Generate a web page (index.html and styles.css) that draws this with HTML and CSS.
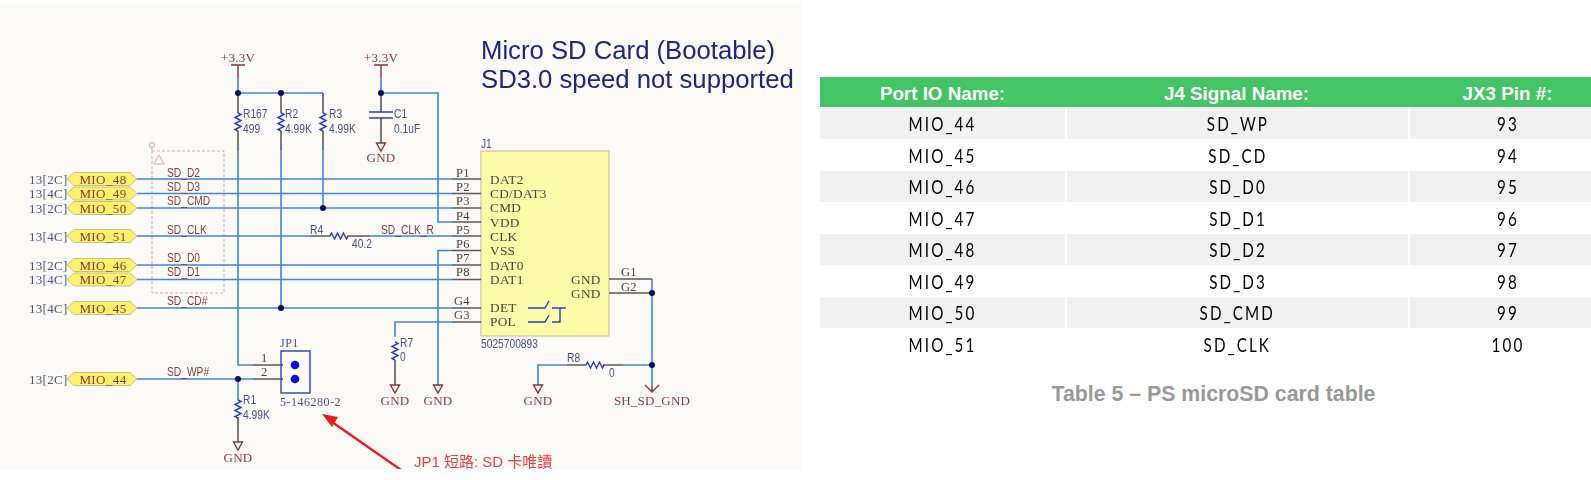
FILE: index.html
```html
<!DOCTYPE html>
<html lang="en">
<head>
  <meta charset="UTF-8">
  <meta name="viewport" content="width=device-width, initial-scale=1.0">
  <title>PS microSD card</title>
  <link rel="stylesheet" href="styles.css">
</head>
<body>
  <div class="page">
    <svg class="schematic" width="802" height="465" viewBox="0 4 802 465" xmlns="http://www.w3.org/2000/svg">
      <defs>
        <path id="gnd" class="pwr" d="M-4.5 0h9L0 8z"/>
        <path id="res" class="zig" d="M0 0l3 1.5-6 3 6 3-6 3 6 3-6 3 3 1.5"/>
        <path id="tag" class="tag" d="M67 0l7-6.5h56l7 6.5-7 6.5H74z"/>
        <circle id="dot" r="3" class="dot"/>
      </defs>

      <!-- title -->
      <text class="title" x="481" y="59">Micro SD Card (Bootable)</text>
      <text class="title" x="481" y="88">SD3.0 speed not supported</text>

      <!-- connector -->
      <rect class="chip" x="481" y="151" width="128" height="185"/>
      <text class="ref" x="481" y="148">J1</text>
      <text class="ref" x="481" y="348">5025700893</text>

      <!-- test point box -->
      <path class="dash" d="M152 151h72v142h-72zM152 151v-4"/>
      <circle class="pink" cx="152" cy="145" r="2.6"/>
      <path class="pink" d="M154 164l5-9 5 9z"/>

      <!-- nets -->
      <path class="wire" d="M137 179H452M137 193.500H452M137 208H452M137 236H310M370 236H452M137 265H452M137 279.500H452M137 308H452M137 379H253"/>
      <path class="wire" d="M238 78V93M238 151V365H253M281 93H323M238 93H281M281 150V308M323 150V208"/>
      <path class="wire" d="M381 78V93M381 93H438V222H452M452 250.500H438V385M395 337V322H452M652 279V385M538 385V365H567M623 365H652M238 379V400"/>
      <path class="stub" d="M238 93V113M238 131V151M281 93V113M281 131V150M323 93V113M323 131V150M381 93V112M381 118V143"/>
      <path class="stub" d="M452 179H481M452 193.500H481M452 208H481M452 222H481M452 236H481M452 250.500H481M452 265H481M452 279.500H481M452 308H481M452 322H481M609 279H652M609 293H652"/>
      <path class="stub" d="M310 236H330M347 236H370M567 365H586M603 365H623M253 365H283M253 379H283M238 417V442M395 360V385"/>
      <path class="pwr" d="M231 65h14M238 65V78M374 65h14M381 65V78M645 385l7 7 7-7M652 385V392"/>
      <path class="plate" d="M369 112h24M369 118h24"/>

      <use href="#res" x="238" y="113"/>
      <use href="#res" x="281" y="113"/>
      <use href="#res" x="323" y="113"/>
      <use href="#res" x="238" y="400"/>
      <use href="#res" x="395" y="342"/>
      <use href="#res" transform="translate(330 236) rotate(-90)"/>
      <use href="#res" transform="translate(586 365) rotate(-90)"/>

      <use href="#gnd" x="381" y="143"/>
      <use href="#gnd" x="238" y="442"/>
      <use href="#gnd" x="395" y="385"/>
      <use href="#gnd" x="438" y="385"/>
      <use href="#gnd" x="538" y="385"/>

      <use href="#dot" x="238" y="93"/>
      <use href="#dot" x="281" y="93"/>
      <use href="#dot" x="381" y="93"/>
      <use href="#dot" x="323" y="208"/>
      <use href="#dot" x="281" y="308"/>
      <use href="#dot" x="238" y="379"/>
      <use href="#dot" x="652" y="293"/>
      <use href="#dot" x="652" y="365"/>

      <!-- switch in connector -->
      <path class="zigw" d="M528 308h17l4-7M528 322h17l4-7M552 308h14M560 308v14h-8"/>

      <!-- jumper -->
      <rect class="jp" x="281" y="351" width="29" height="42"/>
      <circle class="pin" cx="295" cy="365" r="4.300"/>
      <circle class="pin" cx="295" cy="379" r="4.300"/>

      <!-- port tags -->
      <use href="#tag" y="179"/>
      <use href="#tag" y="193.500"/>
      <use href="#tag" y="208"/>
      <use href="#tag" y="236"/>
      <use href="#tag" y="265"/>
      <use href="#tag" y="279.500"/>
      <use href="#tag" y="308"/>
      <use href="#tag" y="379"/>
      <g class="tagtxt">
        <text x="103" y="184">MIO_48</text>
        <text x="103" y="198">MIO_49</text>
        <text x="103" y="213">MIO_50</text>
        <text x="103" y="241">MIO_51</text>
        <text x="103" y="270">MIO_46</text>
        <text x="103" y="284">MIO_47</text>
        <text x="103" y="313">MIO_45</text>
        <text x="103" y="384">MIO_44</text>
      </g>
      <g class="sheet">
        <text x="29" y="184">13[2C]</text>
        <text x="29" y="198">13[4C]</text>
        <text x="29" y="213">13[2C]</text>
        <text x="29" y="241">13[4C]</text>
        <text x="29" y="270">13[2C]</text>
        <text x="29" y="284">13[4C]</text>
        <text x="29" y="313">13[4C]</text>
        <text x="29" y="384">13[2C]</text>
      </g>

      <!-- net names -->
      <g class="net">
        <text x="167" y="177">SD_D2</text>
        <text x="167" y="191">SD_D3</text>
        <text x="167" y="205">SD_CMD</text>
        <text x="167" y="234">SD_CLK</text>
        <text x="167" y="262">SD_D0</text>
        <text x="167" y="276">SD_D1</text>
        <text x="167" y="305">SD_CD#</text>
        <text x="167" y="376">SD_WP#</text>
        <text x="381" y="234">SD_CLK_R</text>
      </g>

      <!-- part values -->
      <g class="ref">
        <text x="243" y="118">R167</text>
        <text x="243" y="133">499</text>
        <text x="285" y="118">R2</text>
        <text x="285" y="133">4.99K</text>
        <text x="329" y="118">R3</text>
        <text x="329" y="133">4.99K</text>
        <text x="394" y="118">C1</text>
        <text x="394" y="133">0.1uF</text>
        <text x="310" y="234">R4</text>
        <text x="352" y="248">40.2</text>
        <text x="243" y="404">R1</text>
        <text x="243" y="419">4.99K</text>
        <text x="400" y="347">R7</text>
        <text x="400" y="361">0</text>
        <text x="567" y="362">R8</text>
        <text x="609" y="377">0</text>
      </g>
      <text class="part" x="280" y="347">JP1</text>
      <text class="part" x="280" y="406">5-146280-2</text>

      <!-- pin numbers and names -->
      <g class="pinno">
        <text x="456" y="177">P1</text>
        <text x="456" y="191">P2</text>
        <text x="456" y="205">P3</text>
        <text x="456" y="220">P4</text>
        <text x="456" y="234">P5</text>
        <text x="456" y="248">P6</text>
        <text x="456" y="262">P7</text>
        <text x="456" y="276">P8</text>
        <text x="454" y="305">G4</text>
        <text x="454" y="319">G3</text>
        <text x="621" y="276">G1</text>
        <text x="621" y="291">G2</text>
        <text x="261" y="362">1</text>
        <text x="261" y="376">2</text>
      </g>
      <g class="pinname">
        <text x="490" y="184">DAT2</text>
        <text x="490" y="198">CD/DAT3</text>
        <text x="490" y="212">CMD</text>
        <text x="490" y="227">VDD</text>
        <text x="490" y="241">CLK</text>
        <text x="490" y="255">VSS</text>
        <text x="490" y="270">DAT0</text>
        <text x="490" y="284">DAT1</text>
        <text x="490" y="312">DET</text>
        <text x="490" y="326">POL</text>
        <text x="571" y="284">GND</text>
        <text x="571" y="298">GND</text>
      </g>

      <!-- power names -->
      <g class="power">
        <text x="238" y="62">+3.3V</text>
        <text x="381" y="62">+3.3V</text>
        <text x="381" y="162">GND</text>
        <text x="238" y="462">GND</text>
        <text x="395" y="405">GND</text>
        <text x="438" y="405">GND</text>
        <text x="538" y="405">GND</text>
        <text x="652" y="405">SH_SD_GND</text>
      </g>

      <!-- note -->
      <path class="arrow" d="M332 422L404 472"/>
      <path class="arrowhead" d="M322 414l16 3-6 10z"/>
      <text class="note" x="414" y="467">JP1 短路: SD 卡唯讀</text>
    </svg>

    <div class="pins">
      <table class="pin-table">
        <thead>
          <tr><th>Port IO Name:</th><th>J4 Signal Name:</th><th>JX3 Pin #:</th></tr>
        </thead>
        <tbody>
          <tr><td><span>MIO_44</span></td><td><span>SD_WP</span></td><td><span>93</span></td></tr>
          <tr><td><span>MIO_45</span></td><td><span>SD_CD</span></td><td><span>94</span></td></tr>
          <tr><td><span>MIO_46</span></td><td><span>SD_D0</span></td><td><span>95</span></td></tr>
          <tr><td><span>MIO_47</span></td><td><span>SD_D1</span></td><td><span>96</span></td></tr>
          <tr><td><span>MIO_48</span></td><td><span>SD_D2</span></td><td><span>97</span></td></tr>
          <tr><td><span>MIO_49</span></td><td><span>SD_D3</span></td><td><span>98</span></td></tr>
          <tr><td><span>MIO_50</span></td><td><span>SD_CMD</span></td><td><span>99</span></td></tr>
          <tr><td><span>MIO_51</span></td><td><span>SD_CLK</span></td><td><span>100</span></td></tr>
        </tbody>
      </table>
      <p class="caption">Table 5 – PS microSD card table</p>
    </div>
  </div>
</body>
</html>
```
FILE: styles.css
```css
html, body {
  margin: 0;
  height: 100%;
  overflow: hidden;
  background: #fff;
}
.page {
  display: flex;
  align-items: flex-start;
  width: 1607px;
}
.schematic {
  flex: none;
  display: block;
  margin-top: 4px;
  background: #fbfaf7;
  filter: blur(0.45px);
}
.schematic text {
  font-family: "Liberation Sans", sans-serif;
}
.title {
  font-size: 25.7px;
  fill: #1c2484;
}
.chip {
  fill: #fdfca8;
  stroke: #dcc9a0;
  stroke-width: 1.4;
}
.wire, .stub, .pwr, .plate, .zig, .zigw, .jp, .dash, .pink, .arrow {
  fill: none;
}
.wire {
  stroke: #3d86e4;
  stroke-width: 1.6;
}
.stub {
  stroke: #5a5a5a;
  stroke-width: 1.6;
}
.pwr {
  stroke: #8e3430;
  stroke-width: 1.4;
}
.plate, .zig, .zigw {
  stroke: #2a3cc4;
  stroke-width: 1.4;
}
.dot {
  fill: #0a0a60;
}
.dash {
  stroke: #dca8a8;
  stroke-dasharray: 3 2;
}
.pink {
  stroke: #dca8a8;
}
.jp {
  stroke: #2a3cc4;
  stroke-width: 1.4;
}
.pin {
  fill: #0a10e0;
}
.tag {
  fill: #fdf16c;
  stroke: #cfc080;
}
.schematic .tagtxt text {
  font-family: "Liberation Serif", serif;
  font-size: 13px;
  letter-spacing: 0.4px;
  fill: #8a3a34;
  text-anchor: middle;
}
.schematic .sheet text {
  font-family: "Liberation Serif", serif;
  font-size: 13px;
  letter-spacing: 0.3px;
  fill: #4c4f8e;
}
.net text, .ref text, text.ref {
  font-size: 12.5px;
  transform-box: fill-box;
  transform-origin: 0 50%;
  transform: scaleX(0.82);
}
.net text {
  fill: #8a3a3a;
}
.ref text, text.ref {
  fill: #4c4f8e;
}
.schematic .part {
  font-family: "Liberation Serif", serif;
  font-size: 12px;
  letter-spacing: 0.5px;
  fill: #4c4f8e;
}
.schematic .pinno text {
  font-family: "Liberation Serif", serif;
  font-size: 12.5px;
  letter-spacing: 0.3px;
  fill: #444;
}
.schematic .pinname text {
  font-family: "Liberation Serif", serif;
  font-size: 13.3px;
  letter-spacing: 0.3px;
  fill: #444;
}
.schematic .power text {
  font-family: "Liberation Serif", serif;
  font-size: 13px;
  letter-spacing: 0.2px;
  fill: #8a3a34;
  text-anchor: middle;
}
.arrow {
  stroke: #f01818;
  stroke-width: 2.3;
}
.arrowhead {
  fill: #f01818;
}
.schematic .note {
  font-family: "Liberation Sans", "Noto Sans CJK TC", sans-serif;
  font-size: 15px;
  fill: #f23c3c;
}

.pins {
  flex: none;
  width: 787px;
  margin: 77px 0 0 18px;
}
.pin-table {
  width: 100%;
  border-collapse: separate;
  border-spacing: 0;
  table-layout: fixed;
  font-family: "Liberation Sans", sans-serif;
}
.pin-table th:nth-child(1) { width: 245px; }
.pin-table th:nth-child(2) { width: 343px; }
.pin-table th {
  box-sizing: border-box;
  height: 31px;
  padding: 3px 0 0;
  background: #43c465;
  background-clip: padding-box;
  border-bottom: 1px solid #fff;
  color: #fff;
  font-size: 18.8px;
  font-weight: bold;
}
.pin-table td {
  box-sizing: border-box;
  height: 31px;
  padding: 0;
  text-align: center;
  color: #000;
  border-left: 2px solid #fff;
}
.pin-table tbody tr:nth-child(even) td {
  height: 32px;
}
.pin-table td:first-child {
  border-left: 0;
}
.pin-table tbody tr:nth-child(odd) td {
  background: #f1f1f1;
  background-clip: padding-box;
}
.pin-table td span {
  display: inline-block;
  font-family: Lato, sans-serif;
  font-size: 19.5px;
  letter-spacing: 2.7px;
  transform: scaleX(0.78);
}
.caption {
  margin: 22px 0 0;
  text-align: center;
  font-family: "Liberation Sans", sans-serif;
  font-size: 21.300px;
  font-weight: bold;
  color: #999;
}
```
